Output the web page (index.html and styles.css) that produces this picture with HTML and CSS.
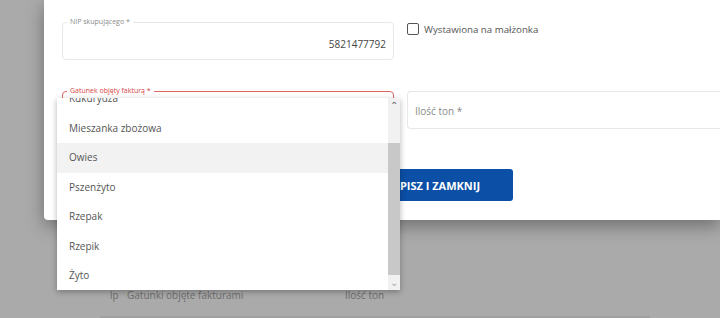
FILE: index.html
```html
<!DOCTYPE html>
<html lang="pl">
<head>
  <meta charset="UTF-8" />
  <meta name="viewport" content="width=device-width, initial-scale=1.0" />
  <title>Faktura</title>
  <link rel="stylesheet" href="styles.css">
</head>
<body>

  <div class="modal">
    <div class="row">
      <div class="field">
        <span class="field-label">NIP skupującego *</span>
        <div class="field-value">5821477792</div>
      </div>
      <label class="check">
        <span class="check-box"></span>
        Wystawiona na małżonka
      </label>
    </div>

    <div class="row row-second">
      <div class="field field-error">
        <span class="field-label">Gatunek objęty fakturą *</span>
      </div>
      <div class="field field-wide">
        <span class="placeholder">Ilość ton *</span>
      </div>
    </div>

    <div class="actions">
      <button class="btn-save">Zapisz i zamknij</button>
    </div>
  </div>

  <div class="table-head">
    <span class="col-lp">lp</span>
    <span class="col-name">Gatunki objęte fakturami</span>
    <span class="col-qty">Ilość ton</span>
  </div>

  <div class="dropdown">
    <ul class="options">
      <li>Kukurydza</li>
      <li>Mieszanka zbożowa</li>
      <li class="active">Owies</li>
      <li>Pszenżyto</li>
      <li>Rzepak</li>
      <li>Rzepik</li>
      <li>Żyto</li>
    </ul>
    <div class="scrollbar">
      <span class="arrow">&#8963;</span>
      <div class="thumb"></div>
      <span class="arrow arrow-down">&#8964;</span>
    </div>
  </div>

</body>
</html>
```

FILE: styles.css
```css
html, body {
  margin: 0;
  padding: 0;
  height: 100%;
  font-family: 'Open Sans', sans-serif;
}

body {
  background: #aaaaaa;
  overflow: hidden;
  position: relative;
}

.modal {
  margin-left: 44px;
  height: 220px;
  background: #fff;
  border-bottom-left-radius: 4px;
  box-shadow: 0 6px 18px rgba(0, 0, 0, 0.35);
  padding: 22px 0 0 18px;
  box-sizing: border-box;
  position: relative;
  z-index: 1;
}

.row {
  display: grid;
  grid-template-columns: 332px 1fr;
  gap: 13px;
}

.row-second {
  margin-top: 31px;
}

.field {
  position: relative;
  height: 38px;
  border: 1px solid #e8e8e8;
  border-radius: 4px;
  box-sizing: border-box;
}

.field-label {
  position: absolute;
  top: -6px;
  left: 4px;
  padding: 0 3px;
  background: #fff;
  font-size: 7px;
  line-height: 10px;
  color: #8a8a8a;
}

.field-value {
  text-align: right;
  font-size: 10px;
  color: #444;
  padding: 14px 7px 0 0;
}

.field-error {
  border-color: #e06666;
}

.field-error .field-label {
  color: #d64545;
}

.field-wide {
  border-right: none;
  border-radius: 4px 0 0 4px;
}

.placeholder {
  display: block;
  font-size: 10px;
  color: #8a8a8a;
  padding: 12px 0 0 7px;
}

.check {
  display: flex;
  align-items: center;
  gap: 5px;
  height: 14px;
  font-size: 9.7px;
  color: #555;
}

.check-box {
  width: 10px;
  height: 10px;
  border: 1px solid #555;
  border-radius: 2px;
}

.actions {
  margin-top: 40px;
  padding-left: 291px;
}

.btn-save {
  width: 160px;
  height: 32px;
  background: #0b4fa6;
  color: #fff;
  border: none;
  border-radius: 3px;
  font-family: 'Open Sans', sans-serif;
  font-weight: bold;
  font-size: 11px;
  text-transform: uppercase;
}

.table-head {
  display: flex;
  margin: 68px 0 0 100px;
  width: 550px;
  padding: 0 0 14px 10px;
  border-bottom: 2px solid #a0a0a0;
  font-size: 10px;
  color: #6e6e6e;
  box-sizing: border-box;
}

.col-lp {
  width: 17px;
}

.col-name {
  width: 218px;
}

.dropdown {
  position: absolute;
  left: 57px;
  top: 98px;
  width: 343px;
  height: 192px;
  background: #fff;
  box-shadow: 0 2px 6px rgba(0, 0, 0, 0.3);
  display: flex;
  overflow: hidden;
  z-index: 2;
}

.options {
  flex: 1;
  list-style: none;
  margin: -14px 0 0 0;
  padding: 0;
}

.options li {
  height: 29.5px;
  line-height: 29.5px;
  padding-left: 12px;
  font-size: 10px;
  color: #555;
}

.options li.active {
  background: #f2f2f2;
}

.scrollbar {
  width: 12px;
  background: #f1f1f1;
  display: flex;
  flex-direction: column;
  align-items: center;
}

.arrow {
  height: 15px;
  font-size: 10px;
  line-height: 15px;
  color: #666;
}

.arrow-down {
  color: #aaa;
  margin-top: auto;
}

.thumb {
  width: 12px;
  height: 134px;
  margin-top: 30px;
  background: #c8c8c8;
}
```
